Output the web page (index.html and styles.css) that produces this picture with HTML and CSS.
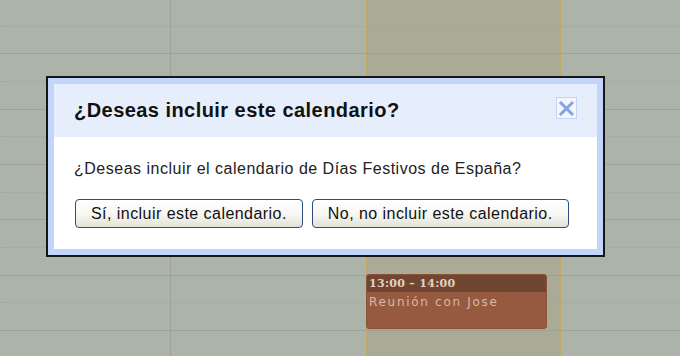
FILE: index.html
```html
<!DOCTYPE html>
<html lang="es">
<head>
<meta charset="utf-8">
<title>Calendario</title>
<link rel="stylesheet" href="styles.css">
</head>
<body>
<div class="calendar">
  <div class="rows">
    <div class="hour"><div class="half"></div></div>
    <div class="hour"><div class="half"></div></div>
    <div class="hour"><div class="half"></div></div>
    <div class="hour"><div class="half"></div></div>
    <div class="hour"><div class="half"></div></div>
    <div class="hour"><div class="half"></div></div>
    <div class="hour"><div class="half"></div></div>
  </div>
  <div class="cols">
    <div class="col col-a"></div>
    <div class="col col-b"></div>
    <div class="col col-today"></div>
    <div class="col col-d"></div>
  </div>
</div>

<div class="event">
  <div class="event-time">13:00 – 14:00</div>
  <div class="event-title">Reunión con Jose</div>
</div>

<div class="dialog">
  <div class="dialog-inner">
    <div class="dialog-head">
      <h1 class="dialog-title">¿Deseas incluir este calendario?</h1>
      <button class="dialog-close" aria-label="Cerrar">
        <svg width="19" height="19" viewBox="0 0 19 19"><path d="M4 4 L15 15 M15 4 L4 15" stroke="#86a3e6" stroke-width="3" stroke-linecap="square" fill="none"/></svg>
      </button>
    </div>
    <div class="dialog-body">
      <p class="dialog-text">¿Deseas incluir el calendario de Días Festivos de España?</p>
      <div class="dialog-buttons">
        <button class="btn">Sí, incluir este calendario.</button>
        <button class="btn">No, no incluir este calendario.</button>
      </div>
    </div>
  </div>
</div>
</body>
</html>
```
FILE: styles.css
```css
html, body {
  margin: 0;
  padding: 0;
}
body {
  width: 680px;
  height: 356px;
  overflow: hidden;
  background: #acb3a8;
  font-family: "Liberation Sans", Arial, sans-serif;
}

.calendar {
  display: grid;
  width: 680px;
  height: 356px;
  overflow: hidden;
}
.rows, .cols {
  grid-area: 1 / 1;
}
.rows {
  margin-top: -1px;
}
.hour {
  box-sizing: border-box;
  height: 55.33px;
  border-bottom: 1px solid #9da497;
}
.half {
  box-sizing: border-box;
  height: 27.67px;
  border-bottom: 1px dotted #a0a69c;
}
.cols {
  display: flex;
  height: 356px;
}
.col {
  box-sizing: border-box;
  height: 100%;
}
.col-a { width: 170px; }
.col-b { width: 196px; border-left: 1px solid #9da497; }
.col-today {
  width: 195px;
  border-left: 1px solid #bea96a;
  border-right: 1px solid #bea96a;
  background: rgba(168, 158, 128, 0.42);
}
.col-d { flex: 1; }

.event {
  position: absolute;
  left: 366px;
  top: 274px;
  width: 181px;
  height: 55px;
  box-sizing: border-box;
  border-radius: 3px;
  background: #955a40;
  border: 1px solid #8a5238;
  overflow: hidden;
}
.event-time {
  height: 17px;
  background: #714630;
  color: #e4d0c0;
  font-family: "DejaVu Serif", serif;
  font-weight: bold;
  font-size: 11px;
  line-height: 17px;
  padding-left: 2px;
  letter-spacing: 0.3px;
}
.event-title {
  color: #d9b9a6;
  font-family: "DejaVu Sans", sans-serif;
  font-size: 12px;
  line-height: 20px;
  padding-left: 2px;
  letter-spacing: 1.7px;
}

.dialog {
  position: absolute;
  left: 46px;
  top: 76px;
  width: 559px;
  box-sizing: border-box;
  border: 2px solid #161616;
  background: #c3d5fb;
  padding: 6px;
}
.dialog-inner {
  background: #ffffff;
}
.dialog-head {
  display: flex;
  align-items: center;
  justify-content: space-between;
  height: 53px;
  padding: 0 20px;
  background: #e6edfb;
}
.dialog-title {
  margin: 0;
  font-size: 20px;
  line-height: 23px;
  font-weight: bold;
  letter-spacing: 0.45px;
  color: #111111;
}
.dialog-close {
  align-self: flex-start;
  margin-top: 13px;
  width: 21px;
  height: 22px;
  padding: 0;
  box-sizing: border-box;
  border: 1px solid #c3d5fb;
  background: #f3f6fe;
  display: flex;
  align-items: center;
  justify-content: center;
}
.dialog-body {
  padding: 22px 20px 21px 20px;
}
.dialog-text {
  margin: 0;
  font-size: 16px;
  line-height: 20px;
  letter-spacing: 0.5px;
  color: #222222;
}
.dialog-buttons {
  display: flex;
  gap: 9px;
  margin-top: 20px;
  margin-left: 1px;
}
.btn {
  height: 29px;
  padding: 0 15px;
  box-sizing: border-box;
  border: 1px solid #2b4f7c;
  border-radius: 4px;
  background: linear-gradient(#ffffff 0%, #f6f6f2 55%, #e4e2d6 100%);
  font-family: "Liberation Sans", Arial, sans-serif;
  font-size: 16px;
  letter-spacing: 0.45px;
  color: #111111;
  line-height: 27px;
}
```
